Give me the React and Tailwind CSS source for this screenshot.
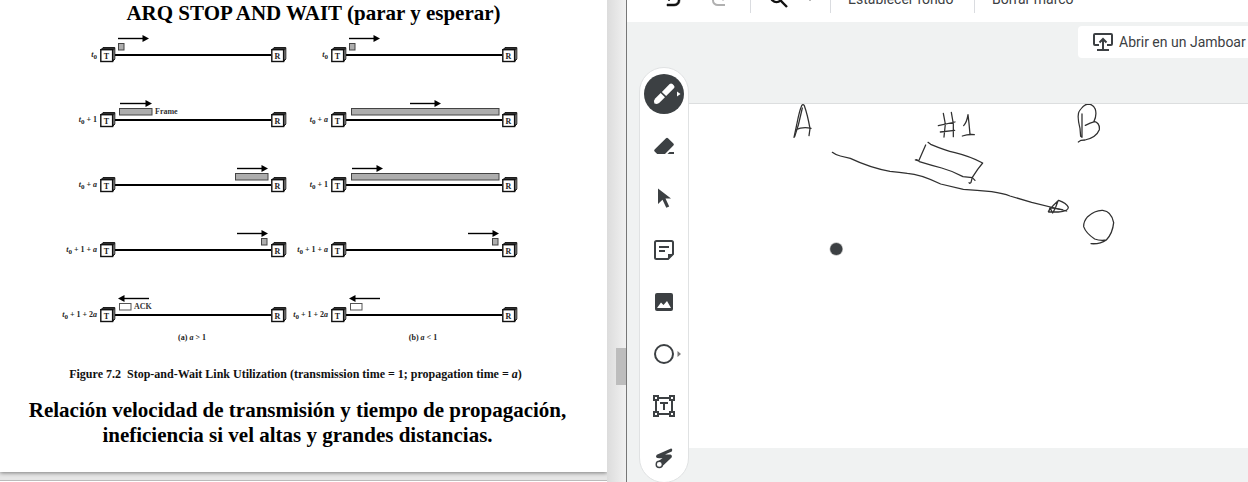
import React from "react";

const COLUMNS = [
  {
    caption: ["(a) ", "a", " > 1"],
    rows: [
      { time: "", arrow: [18, 49], packet: [18, 6] },
      { time: "1", arrow: [20, 52], packet: [19, 33], note: "Frame" },
      { time: "a", arrow: [137, 168], packet: [135, 33] },
      { time: "1+a", arrow: [137, 168], packet: [161, 6] },
      { time: "1+2a", arrow: [49, 18], packet: [19, 12], ack: true, note: "ACK" },
    ],
  },
  {
    caption: ["(b) ", "a", " < 1"],
    rows: [
      { time: "", arrow: [18, 49], packet: [18, 6] },
      { time: "a", arrow: [79, 110], packet: [20, 148] },
      { time: "1", arrow: [21, 52], packet: [20, 148] },
      { time: "1+a", arrow: [137, 168], packet: [161, 6] },
      { time: "1+2a", arrow: [49, 18], packet: [19, 12], ack: true },
    ],
  },
];

function TimeLabel({ time, className }) {
  return (
    <span className={`shrink-0 whitespace-nowrap pt-[14px] text-right text-[8px] font-bold leading-4 text-[#222] ${className}`}>
      <i>t</i>
      <sub className="text-[7px]">0</sub>
      {time.split("+").filter(Boolean).map((term) => (
        <React.Fragment key={term}>
          {" + "}
          {term.replace("a", "")}
          {term.includes("a") && <i>a</i>}
        </React.Fragment>
      ))}
    </span>
  );
}

function Station({ x, name }) {
  return (
    <g transform={`translate(${x} 0)`}>
      <path d="M0.8 16.8L3 14.6H14.8V26L12.6 28.6V16.8Z" fill="#333" stroke="#111" strokeWidth="1" />
      <path d="M13.2 17.6L14.4 16.2V25.4L13.2 26.8Z" fill="#999" />
      <rect x="0.8" y="16.7" width="11.8" height="11.8" fill="#fff" stroke="#111" strokeWidth="1.4" />
      <text x="6.5" y="26" textAnchor="middle" fontSize="8" fontWeight="700" fill="#222">{name}</text>
    </g>
  );
}

function Link({ arrow: [from, to], packet: [x, w], ack, note }) {
  const dir = to > from ? 1 : -1;
  return (
    <svg className="h-8 w-[186px] shrink-0 overflow-visible" viewBox="0 0 186 32" role="img" aria-label="T – R">
      <path d={`M${from} 5.5H${to - dir * 5}`} stroke="#000" strokeWidth="1.4" />
      <path d={`M${to} 5.5L${to - dir * 6.5} 2V9Z`} fill="#000" />
      <rect x={x + 0.5} y="10.5" width={w - 0.5} height="6.5" fill={ack ? "#fff" : "#adadad"} stroke={ack ? "#555" : "#444"} strokeWidth="1" />
      {note && <text x={x + w + 3} y="16" fontSize="8" fontWeight="700" fill="#333">{note}</text>}
      <path d="M15 22H171" stroke="#000" strokeWidth="2" />
      <Station x={0} name="T" />
      <Station x={171} name="R" />
    </svg>
  );
}

function Figure() {
  return (
    <figure className="flex flex-col">
      <div className="flex pt-2">
        {COLUMNS.map((col, i) => (
          <div key={i} className="flex flex-col gap-[33px]">
            {col.rows.map((row, j) => (
              <div key={j} className="flex gap-[3px]">
                <TimeLabel time={row.time} className={i === 0 ? "w-[97px]" : "w-[42px]"} />
                <Link {...row} />
              </div>
            ))}
            <p className={`-mt-7 text-center text-[8px] font-bold leading-4 text-[#222] ${i === 0 ? "pl-[98px]" : "pl-[43px]"}`}>
              {col.caption[0]}
              <i>{col.caption[1]}</i>
              {col.caption[2]}
            </p>
          </div>
        ))}
      </div>
      <figcaption className="whitespace-pre pt-5 pr-4 text-center text-[12px] font-bold leading-4 text-[#111]">
        {"Figure 7.2  Stop-and-Wait Link Utilization (transmission time = 1; propagation time = "}
        <i>a</i>)
      </figcaption>
    </figure>
  );
}

function SlideViewer() {
  return (
    <section className="flex min-w-0 border-r border-[#777] bg-[#e6e6e6] font-['Liberation_Serif',serif] text-black">
      <div className="flex min-w-0 flex-1 flex-col">
        <article className="bg-white pb-6 shadow-[0_1px_4px_rgba(0,0,0,0.45)]">
          <h1 className="whitespace-nowrap pl-5 pt-px text-center text-[21px] font-bold leading-6">
            ARQ STOP AND WAIT (parar y esperar)
          </h1>
          <Figure />
          <p className="pr-3 pt-4 text-center text-[21px] font-bold leading-[25px]">
            Relación velocidad de transmisión y tiempo de propagación,
            <br />
            ineficiencia si vel altas y grandes distancias.
          </p>
        </article>
        <div className="mt-2 flex-1 border-t border-[#bbb] bg-white" />
      </div>
      <div className="flex w-[19px] flex-col items-end bg-gradient-to-r from-[#dcdcdc] to-[#f1f1f1] pt-[348px]">
        <div className="h-[37px] w-[10px] bg-[#bdbdbd]" />
      </div>
    </section>
  );
}

const UNDO =
  "M7 19v-2h7.1q1.575 0 2.738-1T18 13.5q0-1.5-1.162-2.5T14.1 10H7.8l2.6 2.6L9 14 4 9l5-5 1.4 1.4L7.8 8h6.3q2.425 0 4.163 1.575T20 13.5t-1.737 3.925T14.1 19z";

function Divider({ className }) {
  return <span className={`h-7 w-px shrink-0 bg-[#dadce0] ${className}`} />;
}

function TopBar() {
  return (
    <header className="flex h-[22px] items-end overflow-hidden bg-white text-[14px] text-[#3c4043]">
      <div className="flex h-[46px] shrink-0 items-center whitespace-nowrap pl-[33px]">
        <button aria-label="Deshacer">
          <svg className="size-6" viewBox="0 0 24 24" fill="#111" stroke="#111" strokeWidth="0.5"><path d={UNDO} /></svg>
        </button>
        <button aria-label="Rehacer" className="ml-6">
          <svg className="size-6" viewBox="0 0 24 24" fill="#b0b0b0"><path d={UNDO} transform="matrix(-1 0 0 1 24 0)" /></svg>
        </button>
        <Divider className="ml-[18px]" />
        <button aria-label="Zoom" className="ml-4">
          <svg className="size-6" viewBox="0 0 24 24" fill="none" stroke="#111" strokeWidth="2.4">
            <circle cx="9.5" cy="9.5" r="5.6" />
            <path d="M13.7 13.7L20 20" />
          </svg>
        </button>
        <button aria-label="Opciones de zoom" className="ml-[11px]">
          <svg className="size-4" viewBox="0 0 24 24" fill="#777"><path d="M7 10l5 5 5-5z" /></svg>
        </button>
        <Divider className="ml-3" />
        <button className="ml-[17px] w-[109px] text-left">Establecer fondo</button>
        <Divider className="ml-[17px]" />
        <button className="ml-[17px]">Borrar marco</button>
      </div>
    </header>
  );
}

const TOOLS = [
  {
    name: "Bolígrafo",
    active: true,
    art: (
      <>
        <g transform="rotate(-45 20 20)" fill="#fff">
          <path d="M6.5 20Q8 17 10.5 17H18.3V23H10.5Q8 23 6.5 20Z" />
          <path d="M20 17H31Q33 17 33 19V21Q33 23 31 23H20Z" />
        </g>
        <path d="M33 17.5L36.5 20L33 22.5Z" fill="#fff" />
      </>
    ),
  },
  {
    name: "Borrador",
    art: (
      <>
        <path d="M22 12.2Q23 11.2 24 12.2L29.4 17.4Q30.4 18.4 29.4 19.4L21 28H13.2L10.6 25.6Q9.6 24.6 10.6 23.6Z" />
        <path d="M25.5 26H30V28H23.5Z" />
      </>
    ),
  },
  {
    name: "Seleccionar",
    art: <path d="M14 10.5L27 20.5H21.5L25.2 28.4L22.3 29.8L18.5 21.8L14 26Z" />,
  },
  {
    name: "Nota adhesiva",
    art: (
      <>
        <path d="M12.5 11H27.5Q29 11 29 12.5V24L24 29H12.5Q11 29 11 27.5V12.5Q11 11 12.5 11Z" fill="none" stroke="#3c4043" strokeWidth="2" />
        <path d="M24 29.5V24H29.5Z" />
        <path d="M15 17H25M15 21H21" stroke="#3c4043" strokeWidth="2" />
      </>
    ),
  },
  {
    name: "Añadir imagen",
    art: (
      <>
        <rect x="11" y="11" width="18" height="18" rx="2" />
        <path d="M13 26L17 20.5L19.5 23L23 19L27 26Z" fill="#fff" />
      </>
    ),
  },
  {
    name: "Círculo",
    art: (
      <>
        <circle cx="20" cy="20" r="9" fill="none" stroke="#3c4043" strokeWidth="2" />
        <path d="M33.5 17L37 20L33.5 23Z" fill="#777" />
      </>
    ),
  },
  {
    name: "Cuadro de texto",
    art: (
      <g fill="none" stroke="#3c4043" strokeWidth="2">
        <path d="M14 12H26M14 28H26M12 14V26M28 14V26" />
        <path d="M10 10H14V14H10ZM26 10H30V14H26ZM10 26H14V30H10ZM26 26H30V30H26Z" fill="#fff" />
        <path d="M16 17H24M20 17V24" />
      </g>
    ),
  },
  {
    name: "Láser",
    art: (
      <>
        <path d="M27 10.6L12.8 16.8Q11.4 18.2 12.4 19.6Q13.2 20.6 18.6 20L12.6 24.4L17.6 29L27.6 19.6Q28.6 17.4 26.4 16.6L21 16.6L27.8 13.4Q29 11 27 10.6Z" />
        <circle cx="15.3" cy="26.4" r="3.1" fill="#fff" stroke="#3c4043" strokeWidth="1.4" />
      </>
    ),
  },
];

function ToolRail() {
  return (
    <nav className="flex w-[50px] shrink-0 flex-col items-center gap-3 rounded-full border border-[#e0e2e3] bg-white pb-1 pt-[6px]">
      {TOOLS.map((tool) => (
        <button key={tool.name} aria-label={tool.name} className={`size-10 rounded-full ${tool.active ? "bg-[#3c4043]" : ""}`}>
          <svg className="size-10" viewBox="0 0 40 40" fill="#3c4043">{tool.art}</svg>
        </button>
      ))}
    </nav>
  );
}

// Pen strokes, recorded at three units to the pixel.
const INK = [
  "M72 142L80 105Q88 62 95 47Q99 41 103 47Q113 75 120 116L117 137",
  "M74 140L85 105L97 54M78 119Q98 110 123 115",
  "M520 70L526 102L522 141M544 67L550 102V140M505 107L555 96M511 126L554 121",
  "M581 107Q590 98 594 74L597 100L600 133M577 138Q595 132 613 134",
  "M474 157L482 163Q525 181 555 188Q600 199 638 219L623 238L607 262L603 277Q600 282 597 278",
  "M467 165L446 213L436 210Q440 206 448 215Q480 225 515 234Q548 243 579 260L607 263L615 271",
  "M187 187Q197 195 211 198L241 205Q300 233 360 244Q390 247 412 250Q450 252 512 282Q555 292 580 298Q620 301 665 305Q700 310 720 318L785 337Q825 347 890 363",
  "M835 364Q850 345 866 331Q890 339 895 352Q895 365 865 366L836 366L840 353L877 359M864 333L857 352L848 369L842 357",
  "M936 72V142L932 139L930 115Q920 75 928 63Q940 44 953 42Q970 42 976 58Q981 75 972 94Q990 98 988 119Q979 142 945 150L933 151L925 156",
  "M946 106Q961 98 974 95",
  "M1009 450Q990 453 974 447Q948 430 941 410Q940 395 953 380Q975 360 998 361Q1025 364 1031 398Q1028 430 1009 450Q990 463 963 461",
];

function Board() {
  return (
    <main className="mt-9 mb-[35px] min-w-0 flex-1 border-t border-[#dcdedf] bg-white">
      <svg className="block h-full w-full" role="img" aria-label="Pizarra">
        <g transform="translate(81 -14) scale(0.33333)" fill="none" stroke="#303030" strokeWidth="3.8" strokeLinecap="round" strokeLinejoin="round">
          {INK.map((d) => <path key={d} d={d} />)}
        </g>
        <circle cx="147.3" cy="145" r="6.8" fill="#bbb" />
        <circle cx="147.3" cy="145" r="6.1" fill="#3c4043" />
      </svg>
    </main>
  );
}

function Jamboard() {
  return (
    <section className="flex min-w-0 flex-col bg-[#f0f2f2] font-[Roboto,sans-serif]">
      <TopBar />
      <button className="mt-1 flex h-8 w-[170px] items-center gap-[5px] self-end whitespace-nowrap rounded-l-sm bg-white pl-[14px] text-[14px] text-[#3c4043]">
        <svg className="size-[22px] shrink-0" viewBox="0 0 22 22" fill="none" stroke="#3c4043" strokeWidth="2">
          <path d="M7 14H3Q2 14 2 13V4Q2 3 3 3H19Q20 3 20 4V13Q20 14 19 14H15M11 19V8M7.5 11.5L11 8L14.5 11.5M5 19H17" />
        </svg>
        Abrir en un Jamboar
      </button>
      <div className="flex flex-1 pl-3 pt-[9px]">
        <ToolRail />
        <Board />
      </div>
    </section>
  );
}

export default function App() {
  return (
    <div className="grid h-screen grid-cols-[627fr_621fr] overflow-hidden">
      <SlideViewer />
      <Jamboard />
    </div>
  );
}
